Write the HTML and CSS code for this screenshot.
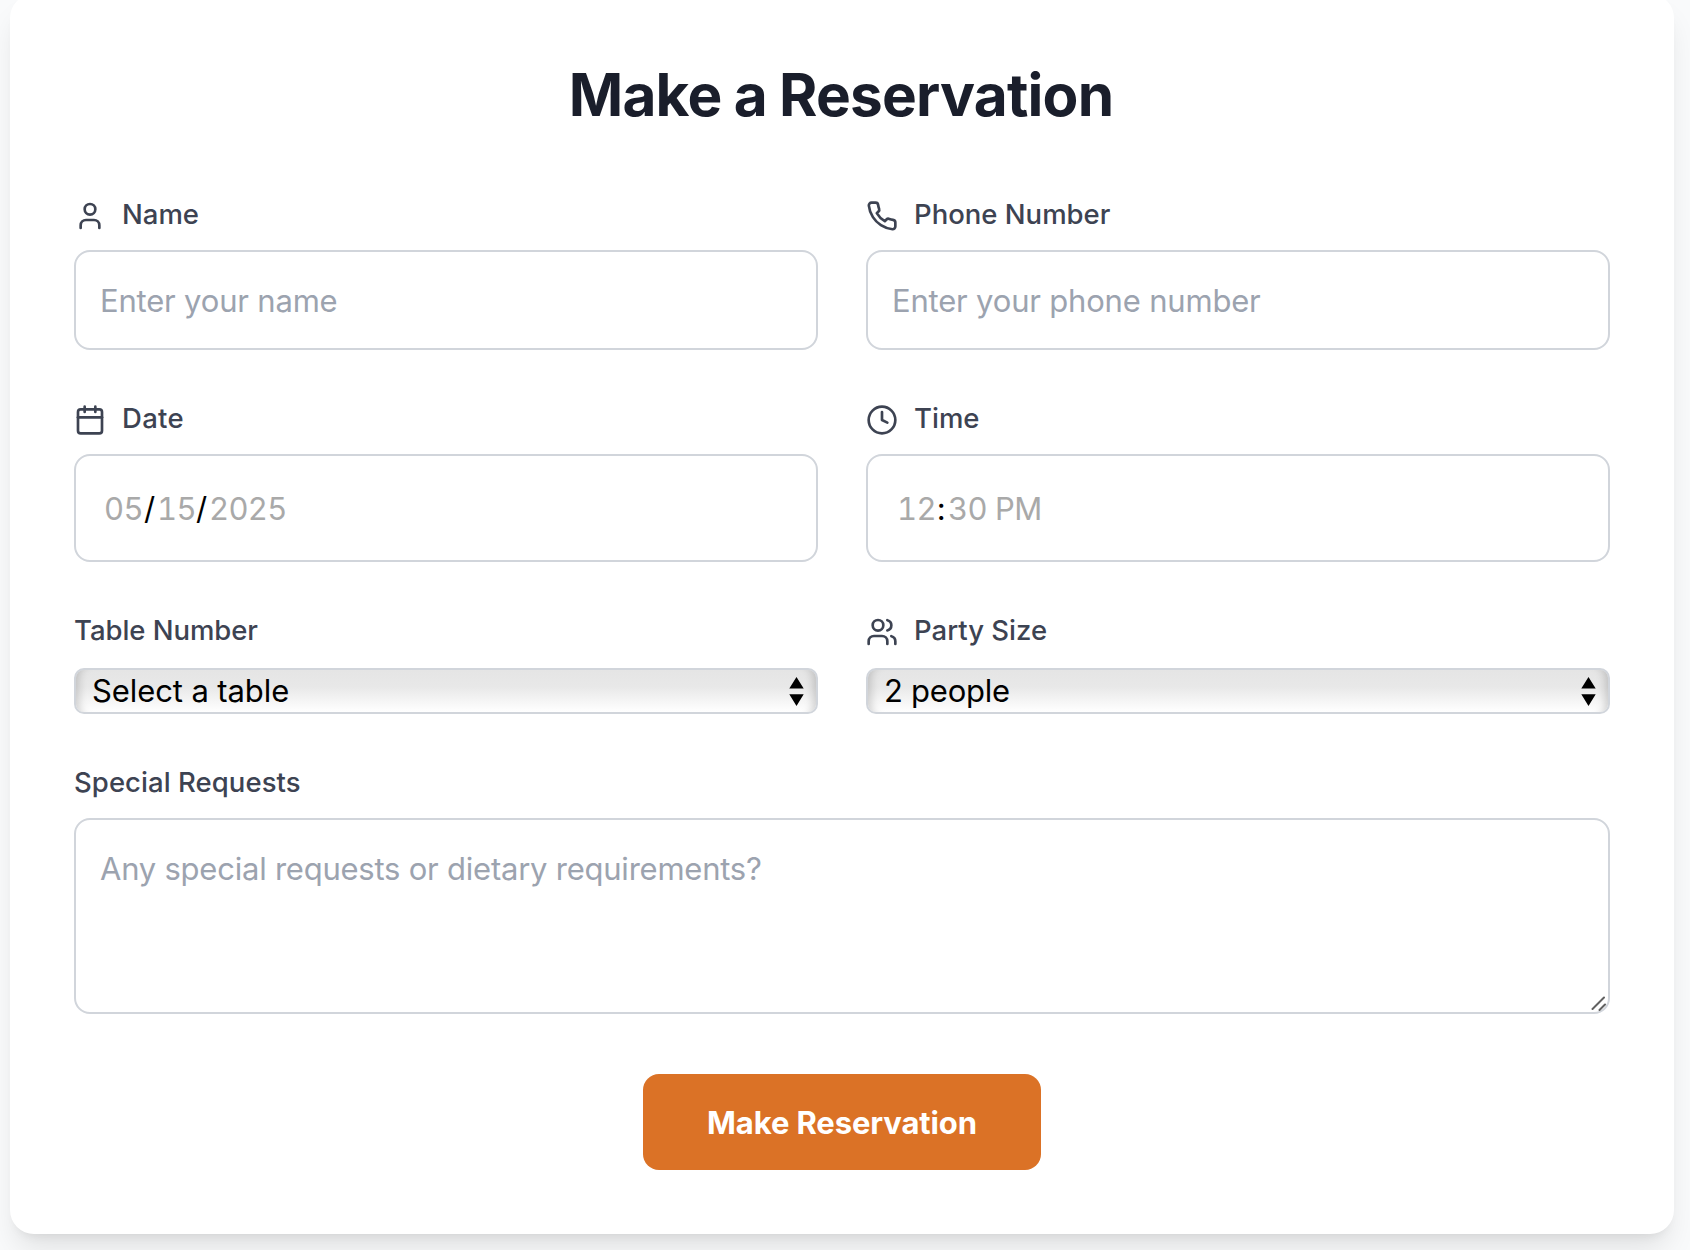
FILE: index.html
```html
<!DOCTYPE html>
<html lang="en">
<head>
<meta charset="utf-8">
<title>Make a Reservation</title>
<link rel="stylesheet" href="styles.css">
</head>
<body>
<main class="card">
  <h2 class="title">Make a Reservation</h2>
  <form class="form">
    <div class="field">
      <label class="label" for="name">
        <svg class="icon" viewBox="0 0 24 24"><path d="M19 21v-2a4 4 0 0 0-4-4H9a4 4 0 0 0-4 4v2"/><circle cx="12" cy="7" r="4"/></svg>
        <span class="label-text">Name</span>
      </label>
      <input class="control" id="name" type="text" placeholder="Enter your name">
    </div>
    <div class="field">
      <label class="label" for="phone">
        <svg class="icon" viewBox="0 0 24 24"><path d="M22 16.92v3a2 2 0 0 1-2.18 2 19.79 19.79 0 0 1-8.63-3.07 19.5 19.5 0 0 1-6-6 19.79 19.79 0 0 1-3.07-8.67A2 2 0 0 1 4.11 2h3a2 2 0 0 1 2 1.72 12.84 12.84 0 0 0 .7 2.81 2 2 0 0 1-.45 2.11L8.09 9.91a16 16 0 0 0 6 6l1.27-1.27a2 2 0 0 1 2.11-.45 12.84 12.84 0 0 0 2.81.7A2 2 0 0 1 22 16.92z"/></svg>
        <span class="label-text">Phone Number</span>
      </label>
      <input class="control" id="phone" type="tel" placeholder="Enter your phone number">
    </div>
    <div class="field">
      <div class="label">
        <svg class="icon" viewBox="0 0 24 24"><path d="M8 2v4M16 2v4"/><rect x="3" y="4" width="18" height="18" rx="2"/><path d="M3 10h18"/></svg>
        <span class="label-text label-date">Date</span>
      </div>
      <div class="control picker picker-date">
        <span class="part month">05</span><span class="sep">/</span><span class="part day">15</span><span class="sep">/</span><span class="part year">2025</span>
      </div>
    </div>
    <div class="field">
      <div class="label">
        <svg class="icon" viewBox="0 0 24 24"><circle cx="12" cy="12" r="10"/><path d="M12 6v6l4 2"/></svg>
        <span class="label-text">Time</span>
      </div>
      <div class="control picker picker-time">
        <span class="part hour">12</span><span class="sep colon">:</span><span class="part minute">30 PM</span>
      </div>
    </div>
    <div class="field">
      <label class="label" for="table"><span class="label-text label-table">Table Number</span></label>
      <div class="select-wrap">
        <select class="select" id="table"><option>Select a table</option></select>
        <svg class="arrows" viewBox="0 0 15 29"><path d="M7.5 0 14.7 11.5H.3zM7.5 29 14.7 17.3H.3z"/></svg>
      </div>
    </div>
    <div class="field">
      <label class="label" for="party">
        <svg class="icon" viewBox="0 0 24 24"><path d="M16 21v-2a4 4 0 0 0-4-4H6a4 4 0 0 0-4 4v2"/><circle cx="9" cy="7" r="4"/><path d="M22 21v-2a4 4 0 0 0-3-3.87M16 3.13a4 4 0 0 1 0 7.75"/></svg>
        <span class="label-text">Party Size</span>
      </label>
      <div class="select-wrap">
        <select class="select select-party" id="party"><option>2 people</option></select>
        <svg class="arrows" viewBox="0 0 15 29"><path d="M7.5 0 14.7 11.5H.3zM7.5 29 14.7 17.3H.3z"/></svg>
      </div>
    </div>
    <div class="field wide">
      <label class="label" for="requests"><span class="label-text label-requests">Special Requests</span></label>
      <div class="textarea-wrap">
        <textarea class="control textarea" id="requests" placeholder="Any special requests or dietary requirements?"></textarea>
        <svg class="grip" viewBox="0 0 16 16"><path d="M1.5 14 13 2.5M8.5 15 14 9.5"/></svg>
      </div>
    </div>
    <div class="actions wide">
      <button class="submit" type="button">Make Reservation</button>
    </div>
  </form>
</main>
</body>
</html>
```
FILE: styles.css
```css
* { box-sizing: border-box; }

html { overflow: hidden; }

body {
  margin: 0;
  height: 1250px;
  padding: 0 16px 0 10px;
  overflow: hidden;
  background: #f9fafb;
  font-family: Inter, "Liberation Sans", sans-serif;
}

.card {
  height: 1240px;
  margin-top: -6px;
  padding: 64px;
  border-radius: 24px;
  background: #fff;
  box-shadow: 0 20px 30px -6px rgba(0, 0, 0, .1), 0 8px 12px -8px rgba(0, 0, 0, .1);
}

.title {
  height: 72px;
  margin: 0 0 64px;
  padding: 1px 2px 0 0;
  color: #1a1e2b;
  font-size: 58.5px;
  font-weight: 700;
  line-height: 72px;
  letter-spacing: -.8px;
  word-spacing: -.8px;
  text-align: center;
}

.form {
  display: grid;
  grid-template-columns: 1fr 1fr;
  gap: 48px;
}

.field { display: flex; flex-direction: column; gap: 16px; min-width: 0; }
.wide { grid-column: 1 / -1; }

.label {
  display: flex;
  gap: 16px;
  height: 40px;
  color: #3d4352;
  font-size: 27.5px;
  font-weight: 500;
  line-height: 40px;
}

.label-date { letter-spacing: .3px; }
.label-table { letter-spacing: -.05px; }
.label-requests { letter-spacing: .06px; }

.icon {
  flex: none;
  width: 32px;
  height: 32px;
  margin-top: 6px;
  fill: none;
  stroke: currentColor;
  stroke-width: 2;
  stroke-linecap: round;
  stroke-linejoin: round;
}

.control {
  display: block;
  width: 100%;
  height: 100px;
  margin: 0;
  padding: 24px;
  border: 2px solid #d1d5db;
  border-radius: 16px;
  outline: 0;
  background: #fff;
  font: 400 31px/48px Inter, "Liberation Sans", sans-serif;
  letter-spacing: -.19px;
}

.control::placeholder { color: #9ca3af; opacity: 1; }

.picker {
  display: flex;
  align-items: center;
  height: 108px;
  padding-top: 2px;
  padding-bottom: 0;
  color: #a9a9a9;
  font-variant-numeric: tabular-nums;
  letter-spacing: -.5px;
}

.picker-date { padding-left: 28px; }
.picker-time { padding-left: 29px; }
.month { width: 40px; }
.day { width: 39px; }
.year { letter-spacing: -.7px; }
.hour { width: 40px; }
.sep { width: 13px; color: #000; }
.colon { width: 11px; }

.select-wrap { position: relative; margin-top: 2px; }

.select {
  display: block;
  appearance: none;
  width: 100%;
  height: 46px;
  margin: 0;
  padding: 0 60px 0 16px;
  border: 2px solid #d1d5db;
  border-radius: 10px;
  background: linear-gradient(#e5e5e5, #e8e8e8 40%, #eee 55%, #fff);
  box-shadow: inset 11px 0 8px -8px rgba(0, 0, 0, .17), inset -11px 0 8px -8px rgba(0, 0, 0, .17);
  color: #000;
  font: 400 31px/42px Inter, "Liberation Sans", sans-serif;
  letter-spacing: -.1px;
}

.select-party { letter-spacing: -.25px; }

.arrows {
  position: absolute;
  top: 8.5px;
  right: 14px;
  width: 15px;
  height: 29px;
}

.textarea-wrap { position: relative; }

.textarea {
  height: 196px;
  padding-top: 25px;
  resize: none;
  overflow: hidden;
  letter-spacing: -.23px;
}

.grip {
  position: absolute;
  right: 3px;
  bottom: 3px;
  width: 16px;
  height: 16px;
  fill: none;
  stroke: #616161;
  stroke-width: 2;
  stroke-linecap: round;
}

.actions { display: flex; justify-content: center; padding-top: 12px; }

.submit {
  width: 398px;
  height: 96px;
  padding: 2px 0 0;
  border: 0;
  border-radius: 16px;
  background: #db7226;
  color: #fff;
  font: 700 31px/48px Inter, "Liberation Sans", sans-serif;
  letter-spacing: -.12px;
}
```
